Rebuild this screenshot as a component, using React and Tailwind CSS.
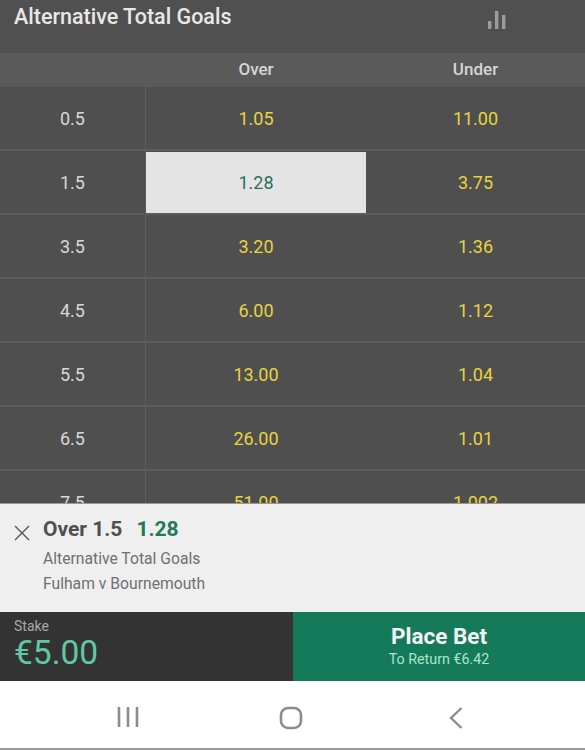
import React from "react";

const rows = [
  ["0.5", "1.05", "11.00"],
  ["1.5", "1.28", "3.75", true],
  ["3.5", "3.20", "1.36"],
  ["4.5", "6.00", "1.12"],
  ["5.5", "13.00", "1.04"],
  ["6.5", "26.00", "1.01"],
  ["7.5", "51.00", "1.002"],
];

export default function App() {
  return (
    <div className="w-[585px] h-[750px] flex flex-col overflow-hidden bg-white font-['Roboto',sans-serif]">
      <div className="h-[53px] shrink-0 bg-[#505050] flex items-start justify-between pl-[14px]">
        <div className="text-[21.5px] leading-[34px] font-medium text-[#e8e8e8]">Alternative Total Goals</div>
        <svg width="18" height="18" viewBox="0 0 18 18" className="mr-[79px] mt-[11px]" fill="#9c9c9c">
          <rect x="0" y="10" width="3.4" height="8" />
          <rect x="7" y="0" width="3.4" height="18" />
          <rect x="14" y="4" width="3.4" height="14" />
        </svg>
      </div>
      <div className="h-[34px] shrink-0 bg-[#5a5a5a] flex items-center text-[17px] font-medium text-[#d6d6d6]">
        <div className="w-[146px]" />
        <div className="w-[220px] text-center">Over</div>
        <div className="flex-1 text-center">Under</div>
      </div>
      <div className="h-[416px] shrink-0 overflow-hidden bg-[#4f4f4f]">
        {rows.map(([line, over, under, selected]) => (
          <div key={line} className="h-[64px] flex border-b-2 border-[#5c5c5c] text-[18px] box-border">
            <div className="w-[146px] shrink-0 flex items-center justify-center border-r border-[#5c5c5c] text-[#d8d8d8]">{line}</div>
            <div className={selected ? "w-[220px] h-[61px] mt-px shrink-0 flex items-center justify-center bg-[#e4e4e4] text-[#2f6f5a]" : "w-[220px] shrink-0 flex items-center justify-center text-[#e8d43c]"}>{over}</div>
            <div className="flex-1 flex items-center justify-center text-[#e8d43c]">{under}</div>
          </div>
        ))}
      </div>
      <div className="h-[109px] shrink-0 bg-[#efefef] border-t border-[#9a9a9a] flex">
        <div className="w-[43px] shrink-0 pl-[14px] pt-[21px]">
          <svg width="16" height="16" viewBox="0 0 16 16" stroke="#555555" strokeWidth="1.4" fill="none">
            <path d="M1 1L15 15M15 1L1 15" />
          </svg>
        </div>
        <div className="pt-[11px]">
          <div className="text-[21px] leading-[28px] font-bold text-[#4f4f4f]">
            Over 1.5<span className="ml-[14px] text-[#1f7a5c]">1.28</span>
          </div>
          <div className="mt-[3px] text-[15.7px] leading-[25px] text-[#707070]">Alternative Total Goals</div>
          <div className="text-[15.7px] leading-[25px] text-[#707070]">Fulham v Bournemouth</div>
        </div>
      </div>
      <div className="h-[69px] shrink-0 flex">
        <div className="w-[293px] shrink-0 bg-[#333333] pl-[14px] pt-[6px]">
          <div className="text-[14px] leading-[16px] text-[#a8a8a8]">Stake</div>
          <div className="text-[33.5px] leading-[38px] text-[#5fc9a3]">€5.00</div>
        </div>
        <div className="flex-1 bg-[#147a5a] flex flex-col items-center pt-[11px]">
          <div className="text-[22.5px] leading-[26px] font-bold text-[#f4f4f4]">Place Bet</div>
          <div className="text-[14.3px] leading-[20px] text-[#a6e6cc]">To Return €6.42</div>
        </div>
      </div>
      <div className="flex-1 bg-white border-b-2 border-[#9a9a9a] flex items-start pt-[25px] pl-[117px]">
        <svg width="22" height="22" viewBox="0 0 22 22" fill="none" stroke="#8c8c8c" strokeWidth="2.6" className="mr-[140px]">
          <path d="M2 1V21M11 1V21M20 1V21" />
        </svg>
        <svg width="24" height="24" viewBox="0 0 24 24" fill="none" stroke="#8c8c8c" strokeWidth="2.6" className="mr-[145px]">
          <rect x="2" y="2" width="20" height="20" rx="7" />
        </svg>
        <svg width="16" height="24" viewBox="0 0 16 24" fill="none" stroke="#8c8c8c" strokeWidth="2.4">
          <path d="M13.5 2L3 12L13.5 22" />
        </svg>
      </div>
    </div>
  );
}
